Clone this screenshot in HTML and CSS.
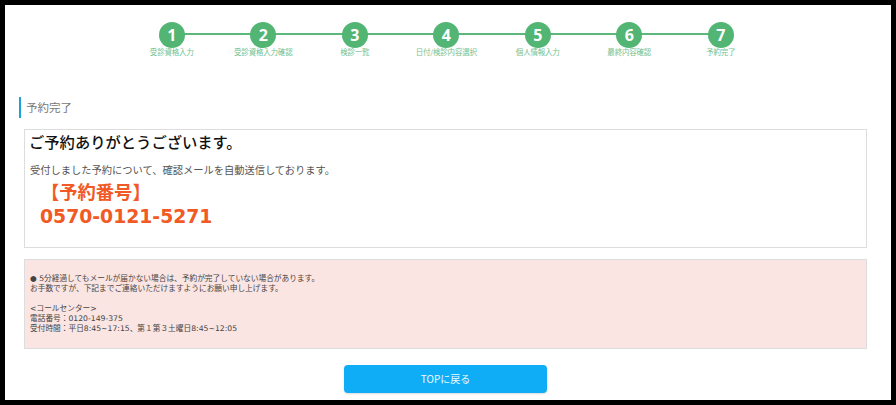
FILE: index.html
```html
<!DOCTYPE html>
<html lang="ja">
<head>
<meta charset="utf-8">
<title>予約完了</title>
<link rel="stylesheet" href="styles.css">
</head>
<body>
<div class="frame">
  <ol class="steps">
    <li class="step"><span class="num">1</span><span class="label">受診資格入力</span></li>
    <li class="step"><span class="num">2</span><span class="label">受診資格入力確認</span></li>
    <li class="step"><span class="num">3</span><span class="label">検診一覧</span></li>
    <li class="step"><span class="num">4</span><span class="label">日付/検診内容選択</span></li>
    <li class="step"><span class="num">5</span><span class="label">個人情報入力</span></li>
    <li class="step"><span class="num">6</span><span class="label">最終内容確認</span></li>
    <li class="step"><span class="num">7</span><span class="label">予約完了</span></li>
  </ol>
  <h1 class="title">予約完了</h1>
  <section class="card">
    <h2 class="thanks">ご予約ありがとうございます。</h2>
    <p class="sent">受付しました予約について、確認メールを自動送信しております。</p>
    <p class="no-label">【予約番号】</p>
    <p class="no-value">0570-0121-5271</p>
  </section>
  <section class="notice">
    <p>● 5分経過してもメールが届かない場合は、予約が完了していない場合があります。<br>お手数ですが、下記までご連絡いただけますようにお願い申し上げます。</p>
    <p>&lt;コールセンター&gt;<br>電話番号：0120-149-375<br>受付時間：平日8:45~17:15、第１第３土曜日8:45~12:05</p>
  </section>
  <div class="actions"><a class="btn" href="#">TOPに戻る</a></div>
</div>
</body>
</html>
```
FILE: styles.css
```css
* { box-sizing: border-box; }
html, body { margin: 0; height: 100%; }
body { background: #000; overflow: hidden; font-family: "Noto Sans CJK JP", "Noto Sans", sans-serif; }
.frame {
  width: 886px; height: 395px; margin: 5px 0 0 5px;
  background: #fff; padding: 0 0 0 14px; overflow: hidden;
}
.steps {
  list-style: none; margin: 17px 0 0 107px; padding: 0;
  display: grid; grid-template-columns: repeat(7, 91.5px); width: 640.5px;
  position: relative;
}
.steps::before {
  content: ""; position: absolute; left: 45px; right: 45px; top: 11px; height: 2px; background: #5cb87a;
}
.step { display: flex; flex-direction: column; align-items: center; position: relative; }
.num {
  width: 26px; height: 26px; border-radius: 50%; background: #52b573; color: #fff;
  font: 700 16px/26px "Open Sans", sans-serif; text-align: center;
}
.label { font-size: 7.5px; line-height: 11px; margin-top: -2px; color: #74c18f; white-space: nowrap; letter-spacing: -0.2px; }
.title {
  margin: 40px 0 0; border-left: 2px solid #1ba1dc; padding-left: 5px;
  font-size: 11.5px; font-weight: 400; line-height: 21px; color: #777;
}
.card {
  margin: 11px 0 0 5px; width: 843px; height: 119px; border: 1px solid #ddd; padding: 0 4px;
}
.thanks { margin: 0; font-size: 15.3px; line-height: 22px; font-weight: 500; color: #111; }
.sent { margin: 11px 0 0 1px; font-size: 10.25px; line-height: 14px; color: #555; }
.no-label { margin: 2px 0 0 12px; font-size: 18.3px; line-height: 25px; font-weight: 700; color: #f15a24; }
.no-value { margin: 0 0 0 11px; font: 700 18.8px/25px "DejaVu Sans", sans-serif; color: #f15a24; }
.notice {
  margin: 11px 0 0 5px; width: 843px; height: 90px; background: #fae5e2; border: 1px solid #ddd;
  padding: 14px 5px; font-family: "DejaVu Sans", "Noto Sans CJK JP", sans-serif;
  font-size: 7.7px; line-height: 10.1px; color: #444;
}
.notice p { margin: 0 0 10.1px; }
.actions { display: flex; justify-content: center; margin: 16px 0 0; padding-right: 19px; }
.btn {
  width: 203px; height: 28px; border-radius: 4px; background: #0fadf5; color: #eef9ff;
  font-size: 10px; line-height: 28px; text-align: center; text-decoration: none;
  box-shadow: 0 1px 2px rgba(0,0,0,.15);
}
```
